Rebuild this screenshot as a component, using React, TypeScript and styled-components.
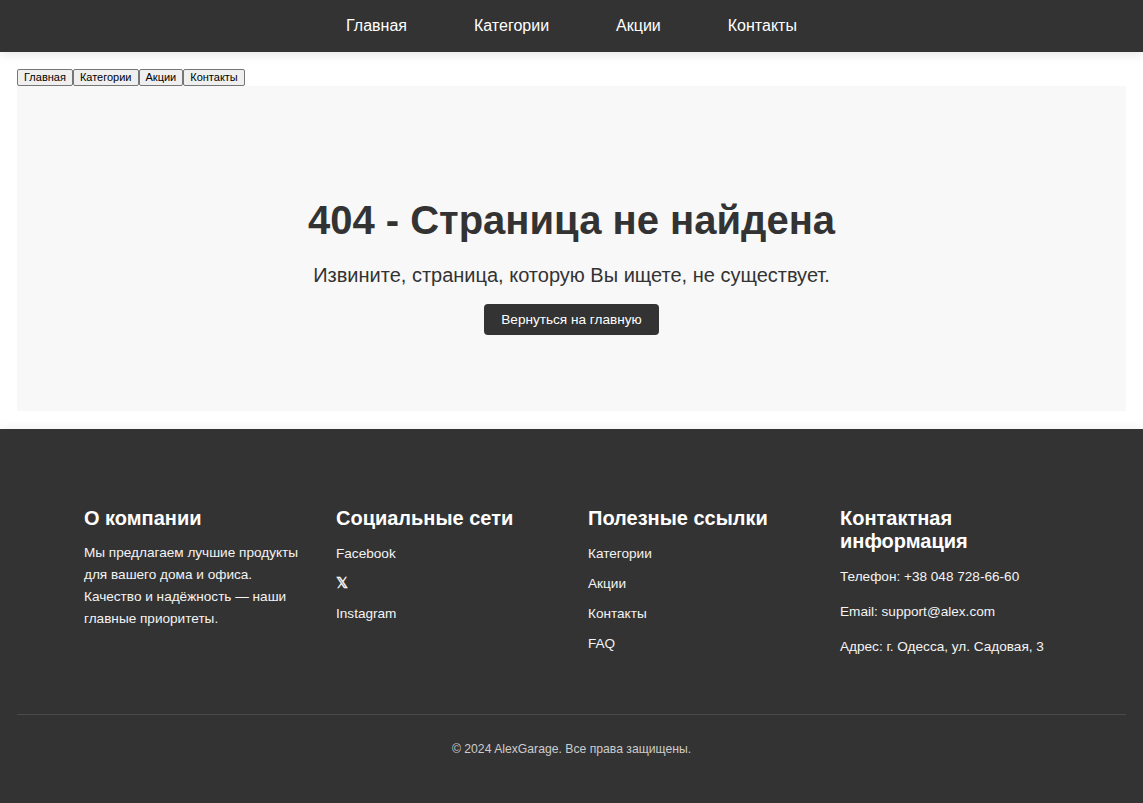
import React from "react";
import styled, { createGlobalStyle } from "styled-components";

const Global = createGlobalStyle`
  html, body { margin: 0; padding: 0; background: #fff; }
  body { font-family: "Liberation Sans", Arial, sans-serif; }
  * { box-sizing: border-box; }
`;

const Header = styled.header`
  height: 52px;
  background: #333;
  display: flex;
  align-items: center;
  justify-content: center;
  gap: 67px;
  box-shadow: 0 2px 10px rgba(0, 0, 0, 0.1);
  position: relative;
  z-index: 1;
`;

const NavLink = styled.a`
  color: #fff;
  font-size: 16px;
  line-height: 18px;
  text-decoration: none;
  margin-top: -1px;
`;

const Main = styled.main`
  padding: 17px 17px 18px;
`;

const TabRow = styled.div`
  display: flex;
`;

const TabButton = styled.button`
  font-family: "Liberation Sans", Arial, sans-serif;
  font-size: 11px;
  line-height: 13px;
  padding: 1px 6px;
  margin: 0;
  background: #efefef;
  border: 1px solid #767676;
  border-radius: 2px;
  color: #000;
`;

const NotFound = styled.section`
  background: #f8f8f8;
  padding: 111px 20px 76px;
  display: flex;
  flex-direction: column;
  align-items: center;
  text-align: center;
`;

const Title = styled.h1`
  margin: 0 0 21px;
  font-size: 40px;
  line-height: 46px;
  font-weight: bold;
  color: #333;
`;

const Lead = styled.p`
  margin: 0 0 17px;
  font-size: 20px;
  line-height: 23px;
  color: #333;
`;

const HomeButton = styled.a`
  display: inline-block;
  background: #333;
  color: #fff;
  font-size: 13.6px;
  line-height: 17px;
  padding: 7px 17px;
  border-radius: 4px;
  text-decoration: none;
`;

const Footer = styled.footer`
  background: #333;
  color: #f4f4f4;
  padding: 78px 17px 48px;
  box-shadow: 0 -2px 10px rgba(0, 0, 0, 0.05);
`;

const Columns = styled.div`
  display: grid;
  grid-template-columns: repeat(4, 1fr);
  column-gap: 33px;
  padding: 0 67px;
`;

const Column = styled.div`
  display: flex;
  flex-direction: column;
`;

const ColTitle = styled.h3`
  margin: 0 0 12px;
  font-size: 20px;
  line-height: 23px;
  font-weight: bold;
  color: #fff;
`;

const About = styled.p`
  margin: 0;
  font-size: 13.6px;
  line-height: 22px;
`;

const LinkList = styled.ul`
  list-style: none;
  margin: 2px 0 0;
  padding: 0;
  display: flex;
  flex-direction: column;
  gap: 10px;
`;

const LinkItem = styled.li`
  font-size: 13.6px;
  line-height: 20px;
  height: 20px;
  a { color: #f4f4f4; text-decoration: none; }
`;

const XMark = styled.span`
  font-size: 15px;
  font-weight: bold;
  line-height: 0;
`;

const ContactList = styled.div`
  display: flex;
  flex-direction: column;
  gap: 13px;
  margin-top: 1px;
`;

const ContactLine = styled.p`
  margin: 0;
  font-size: 13.6px;
  line-height: 22px;
`;

const Divider = styled.hr`
  border: 0;
  border-top: 1px solid #4a4a4a;
  margin: 56px 0 0;
`;

const Copyright = styled.p`
  margin: 27px 0 0;
  text-align: center;
  font-size: 12.2px;
  line-height: 15px;
  color: #ccc;
`;

export default function App() {
  return (
    <>
      <Global />
      <Header>
        <NavLink href="#">Главная</NavLink>
        <NavLink href="#">Категории</NavLink>
        <NavLink href="#">Акции</NavLink>
        <NavLink href="#">Контакты</NavLink>
      </Header>
      <Main>
        <TabRow>
          <TabButton>Главная</TabButton>
          <TabButton>Категории</TabButton>
          <TabButton>Акции</TabButton>
          <TabButton>Контакты</TabButton>
        </TabRow>
        <NotFound>
          <Title>404 - Страница не найдена</Title>
          <Lead>Извините, страница, которую Вы ищете, не существует.</Lead>
          <HomeButton href="#">Вернуться на главную</HomeButton>
        </NotFound>
      </Main>
      <Footer>
        <Columns>
          <Column>
            <ColTitle>О компании</ColTitle>
            <About>
              Мы предлагаем лучшие продукты для вашего дома и офиса. Качество и
              надёжность — наши главные приоритеты.
            </About>
          </Column>
          <Column>
            <ColTitle>Социальные сети</ColTitle>
            <LinkList>
              <LinkItem><a href="#">Facebook</a></LinkItem>
              <LinkItem><a href="#"><XMark>𝕏</XMark></a></LinkItem>
              <LinkItem><a href="#">Instagram</a></LinkItem>
            </LinkList>
          </Column>
          <Column>
            <ColTitle>Полезные ссылки</ColTitle>
            <LinkList>
              <LinkItem><a href="#">Категории</a></LinkItem>
              <LinkItem><a href="#">Акции</a></LinkItem>
              <LinkItem><a href="#">Контакты</a></LinkItem>
              <LinkItem><a href="#">FAQ</a></LinkItem>
            </LinkList>
          </Column>
          <Column>
            <ColTitle>Контактная информация</ColTitle>
            <ContactList>
              <ContactLine>Телефон: +38 048 728-66-60</ContactLine>
              <ContactLine>Email: support@alex.com</ContactLine>
              <ContactLine>Адрес: г. Одесса, ул. Садовая, 3</ContactLine>
            </ContactList>
          </Column>
        </Columns>
        <Divider />
        <Copyright>© 2024 AlexGarage. Все права защищены.</Copyright>
      </Footer>
    </>
  );
}
